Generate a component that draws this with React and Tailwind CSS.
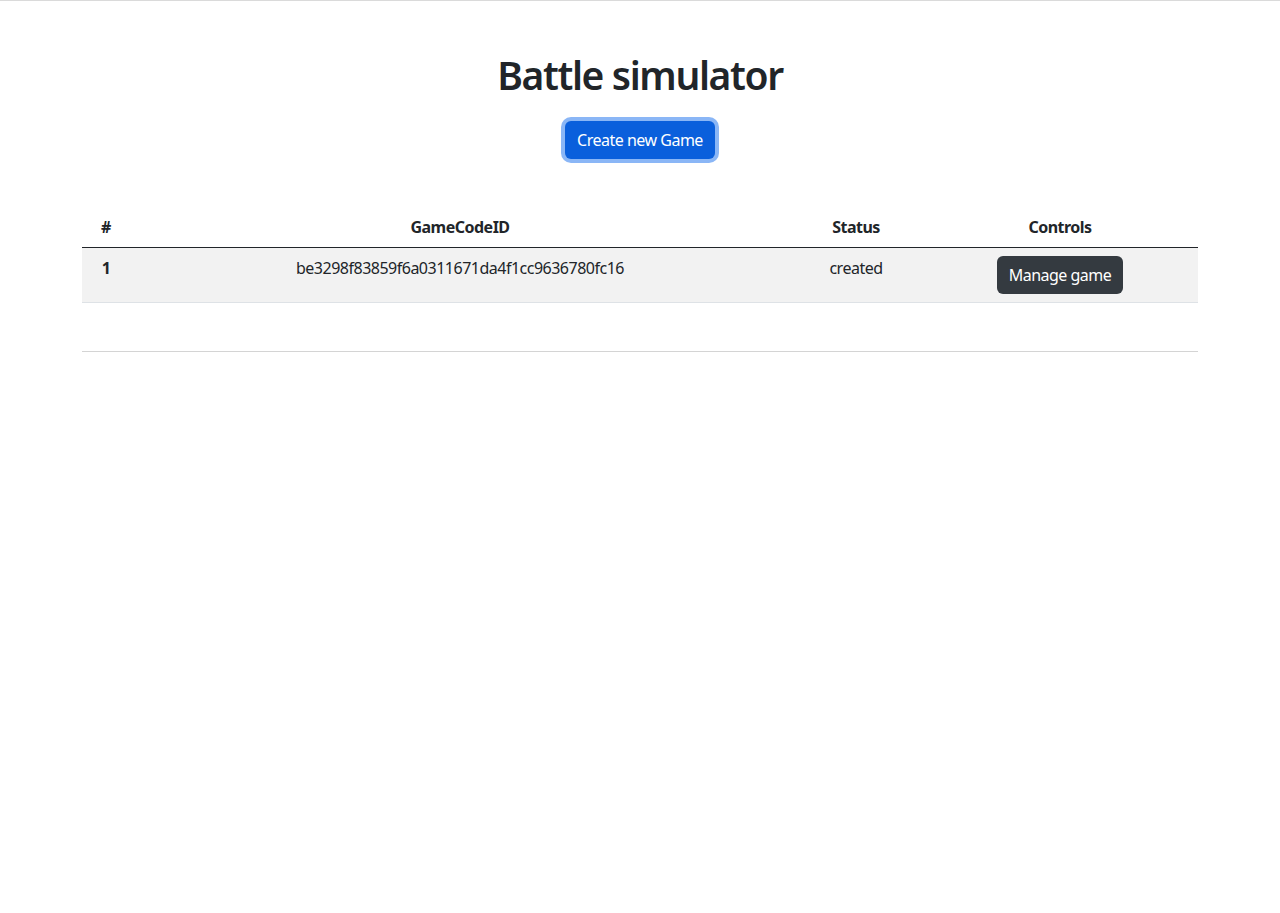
export default function App() {
  return (
    <div className="min-h-screen bg-white border-t border-[#dadada] font-['Noto_Sans',sans-serif] text-[#212529] tracking-[-0.5px]">
      <div className="mx-auto w-[1140px] px-3">
        <h1 className="mt-[50px] text-center text-[39px] leading-[48px] font-semibold tracking-[-0.035em]">Battle simulator</h1>
        <div className="mt-[22px] flex justify-center">
          <button className="h-[38px] rounded-[6px] bg-[#0a5fdc] px-3 text-base leading-6 text-white ring-4 ring-[#8ab6f6]">
            Create new Game
          </button>
        </div>
        <table className="mt-[48px] w-full table-fixed border-collapse text-base leading-6">
          <colgroup>
            <col className="w-[48px]" />
            <col className="w-[660px]" />
            <col className="w-[132px]" />
            <col className="w-[276px]" />
          </colgroup>
          <thead>
            <tr className="border-b border-[#212529]">
              <th className="h-[40px] px-2 py-2 text-center font-bold">#</th>
              <th className="px-2 py-2 text-center font-bold">GameCodeID</th>
              <th className="px-2 py-2 text-center font-bold">Status</th>
              <th className="px-2 py-2 text-center font-bold">Controls</th>
            </tr>
          </thead>
          <tbody>
            <tr className="border-b border-[#dee2e6] bg-[#f2f2f2]">
              <th className="h-[54px] px-2 py-2 text-center align-top font-bold">1</th>
              <td className="px-2 py-2 text-center align-top">be3298f83859f6a0311671da4f1cc9636780fc16</td>
              <td className="px-2 py-2 text-center align-top">created</td>
              <td className="px-2 py-2 text-center align-top">
                <button className="h-[38px] rounded-[6px] bg-[#343a40] px-3 text-base leading-6 text-white">
                  Manage game
                </button>
              </td>
            </tr>
            <tr className="border-b border-[#d4d4d4]">
              <td className="h-[49px]"></td>
              <td></td>
              <td></td>
              <td></td>
            </tr>
          </tbody>
        </table>
      </div>
    </div>
  );
}
